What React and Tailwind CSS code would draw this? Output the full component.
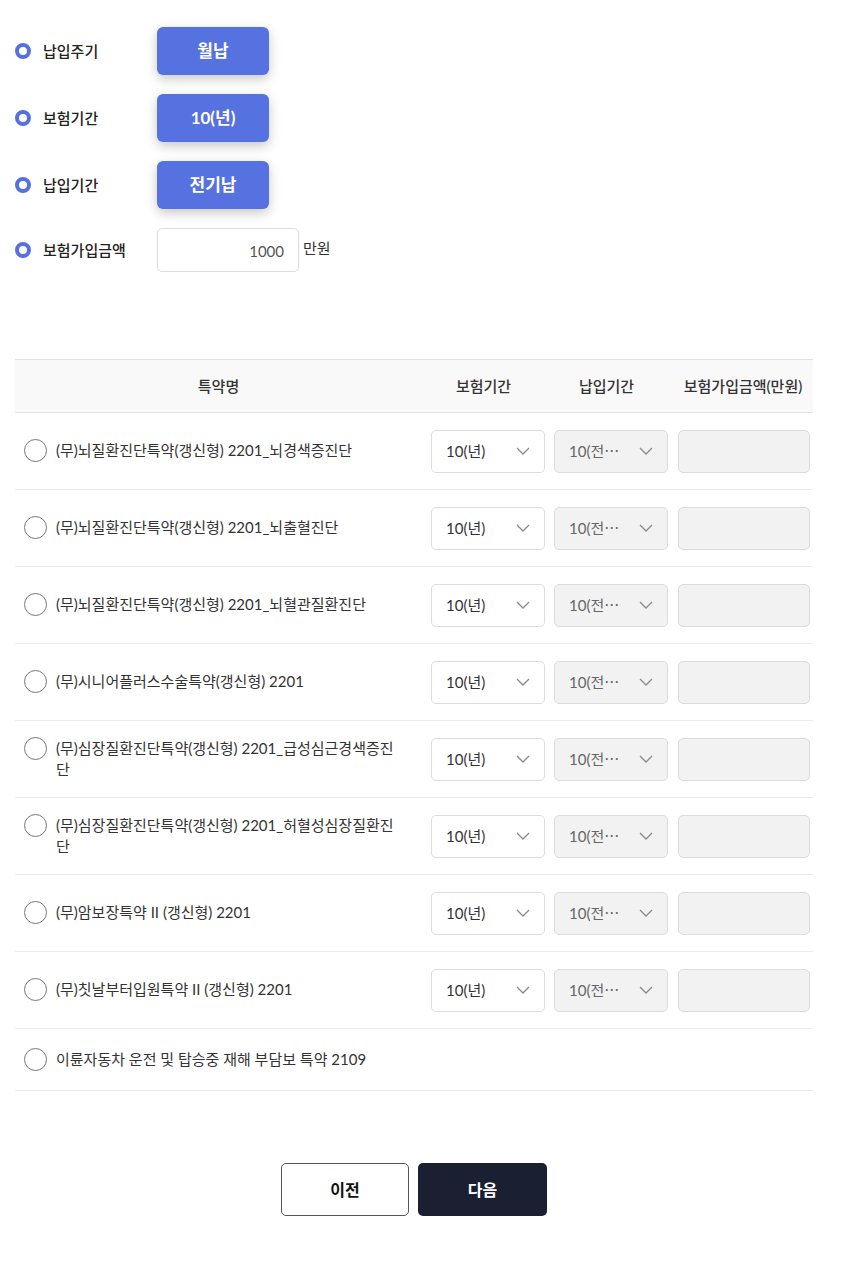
import { useState } from "react";

const font = { fontFamily: '"Lato", "Noto Sans CJK KR", sans-serif' };

const riders = [
    { name: "(무)뇌질환진단특약(갱신형) 2201_뇌경색증진단", opts: true },
    { name: "(무)뇌질환진단특약(갱신형) 2201_뇌출혈진단", opts: true },
    { name: "(무)뇌질환진단특약(갱신형) 2201_뇌혈관질환진단", opts: true },
    { name: "(무)시니어플러스수술특약(갱신형) 2201", opts: true },
    { name: "(무)심장질환진단특약(갱신형) 2201_급성심근경색증진단", opts: true },
    { name: "(무)심장질환진단특약(갱신형) 2201_허혈성심장질환진단", opts: true },
    { name: "(무)암보장특약 II (갱신형) 2201", opts: true },
    { name: "(무)칫날부터입원특약 II (갱신형) 2201", opts: true },
    { name: "이륜자동차 운전 및 탑승중 재해 부담보 특약 2109", opts: false },
];

function Chevron() {
    return (
        <svg width="14" height="8" viewBox="0 0 14 8" fill="none" className="shrink-0">
            <path d="M1 1l6 6 6-6" stroke="#8a8a8a" strokeWidth="1.3" />
        </svg>
    );
}

function Dot() {
    return <span className="block w-[16px] h-[16px] rounded-full border-[4px] border-[#5570df] shrink-0" />;
}

function App() {
    const [checked, setChecked] = useState({});

    const topRows = [
        { label: "납입주기", value: "월납" },
        { label: "보험기간", value: "10(년)" },
        { label: "납입기간", value: "전기납" },
    ];

    return (
        <div className="bg-white min-h-[1262px] w-[842px]" style={font}>
            <div className="ml-[15px] w-[798px] pt-[27px]">
                {/* top options */}
                <div className="flex flex-col gap-[19px]">
                    {topRows.map((r) => (
                        <div key={r.label} className="flex items-center h-[48px]">
                            <Dot />
                            <span className="ml-[12px] w-[114px] text-[15px] font-medium text-[#222]">{r.label}</span>
                            <button className="w-[112px] h-[48px] rounded-[6px] bg-[#5671e0] text-white text-[17px] font-bold shadow-[0_4px_12px_rgba(0,0,0,0.22)]">
                                {r.value}
                            </button>
                        </div>
                    ))}
                    <div className="flex items-center h-[44px]">
                        <Dot />
                        <span className="ml-[12px] w-[114px] text-[15px] font-medium text-[#222]">보험가입금액</span>
                        <div className="w-[142px] h-[44px] border border-[#dcdcdc] rounded-[5px] flex items-center justify-end pr-[14px] pt-[2px] text-[15px] text-[#555]">
                            1000
                        </div>
                        <span className="ml-[4px] self-start mt-[9px] text-[15px] text-[#333]">만원</span>
                    </div>
                </div>

                {/* rider table */}
                <div className="mt-[87px] border-t border-[#e2e2e2]">
                    <div className="grid grid-cols-[412px_123px_123px_140px] h-[53px] items-center bg-[#f9f9f9] border-b border-[#e2e2e2] text-[15px] font-medium text-[#333]">
                        <div className="text-center pr-[5px]">특약명</div>
                        <div className="text-center pr-[10px]">보험기간</div>
                        <div className="text-center pr-[10px]">납입기간</div>
                        <div className="text-center">보험가입금액(만원)</div>
                    </div>
                    {riders.map((r, i) => (
                        <div
                            key={i}
                            className={
                                "grid grid-cols-[412px_123px_123px_140px] items-center border-b border-[#ececec] " +
                                (r.opts ? "h-[77px]" : "h-[62px]")
                            }
                        >
                            <div className="flex items-start pl-[9px] pr-[22px]">
                                <button
                                    onClick={() => setChecked({ ...checked, [i]: !checked[i] })}
                                    className="w-[23px] h-[23px] rounded-full border-[1.5px] border-[#777] shrink-0 mt-[-1px]"
                                />
                                <span className="ml-[9px] text-[15px] leading-[21px] text-[#333]">{r.name}</span>
                            </div>
                            {r.opts && (
                                <>
                                    <div className="pl-[4px] pr-[5px]">
                                        <div className="h-[43px] border border-[#dcdcdc] rounded-[5px] bg-white flex items-center justify-between pl-[14px] pr-[14px] text-[15px] text-[#333]">
                                            <span>10(년)</span>
                                            <Chevron />
                                        </div>
                                    </div>
                                    <div className="pl-[4px] pr-[5px]">
                                        <div className="h-[43px] border border-[#dcdcdc] rounded-[5px] bg-[#f2f2f2] flex items-center justify-between pl-[14px] pr-[14px] text-[15px] text-[#666]">
                                            <span>10(전⋯</span>
                                            <Chevron />
                                        </div>
                                    </div>
                                    <div className="pl-[5px] pr-[3px]">
                                        <div className="h-[43px] border border-[#dcdcdc] rounded-[5px] bg-[#f2f2f2]" />
                                    </div>
                                </>
                            )}
                        </div>
                    ))}
                </div>

                {/* nav buttons */}
                <div className="mt-[72px] flex justify-center gap-[9px]">
                    <button className="w-[128px] h-[53px] border border-[#555] rounded-[5px] bg-white text-[16px] font-bold text-[#111]">
                        이전
                    </button>
                    <button className="w-[129px] h-[53px] rounded-[5px] bg-[#1a1f32] text-[16px] font-bold text-white">
                        다음
                    </button>
                </div>
            </div>
        </div>
    );
}

export default App;
